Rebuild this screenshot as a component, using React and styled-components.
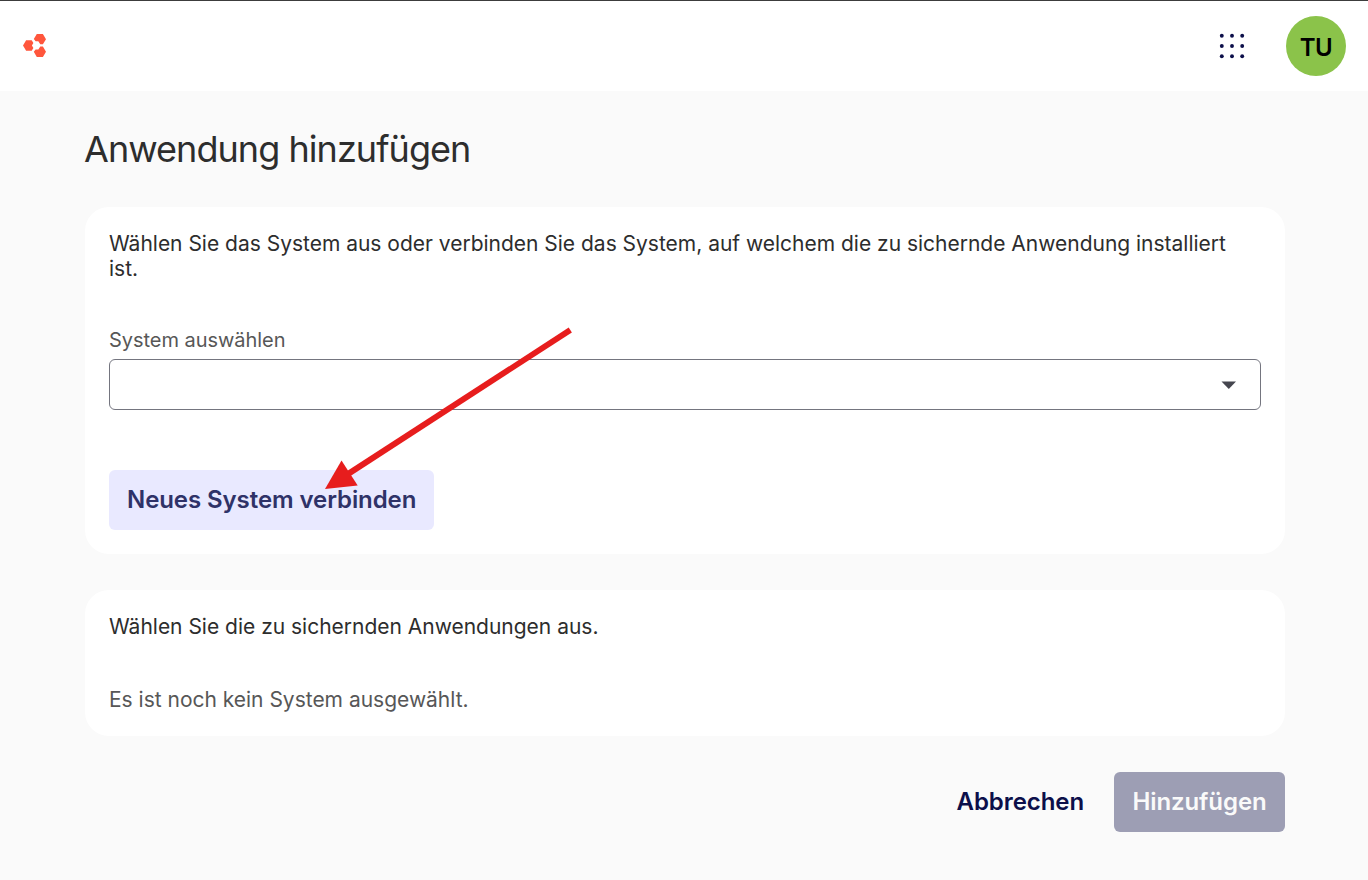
import React from "react"
import styled, { createGlobalStyle } from "styled-components"

const GlobalStyle = createGlobalStyle`
  * {
    box-sizing: border-box;
  }

  body {
    margin: 0;
    background: #fafafa;
    color: #2d2d2d;
    font-family: Inter, "Liberation Sans", sans-serif;
    font-size: 21px;
  }
`

const Page = styled.div`
  min-height: 880px;
  background: #fafafa;
`

const Header = styled.header`
  height: 91px;
  padding: 0 22px;
  display: flex;
  align-items: center;
  justify-content: space-between;
  background: #ffffff;
  border-top: 1px solid #3c3c3c;
`

const HeaderActions = styled.div`
  display: flex;
  align-items: center;
  gap: 41px;
`

const Avatar = styled.div`
  width: 60px;
  height: 60px;
  border-radius: 50%;
  display: flex;
  align-items: center;
  justify-content: center;
  padding-top: 2px;
  background: #8bc34a;
  color: #000000;
  font-size: 24px;
  font-weight: 600;
  letter-spacing: -0.6px;
`

const Main = styled.main`
  width: 1200px;
  margin-left: 85px;
  padding-top: 34px;
`

const Title = styled.h1`
  margin: 0 0 34px -1px;
  font-size: 36px;
  font-weight: 400;
  line-height: 48px;
  letter-spacing: -0.95px;
`

const Card = styled.section`
  position: relative;
  height: ${props => props.$height};
  margin-bottom: 36px;
  padding: 24px;
  border-radius: 24px;
  background: #ffffff;
`

const Text = styled.p`
  margin: 0;
  padding-right: 12px;
  line-height: 25px;
  letter-spacing: -0.01px;
`

const Hint = styled(Text)`
  margin-top: 48px;
  color: #575757;
`

const Label = styled.label`
  display: block;
  margin-top: 47px;
  color: #575757;
  font-size: 20px;
  line-height: 24px;
  letter-spacing: -0.04px;
`

const Select = styled.div`
  height: 51px;
  margin: 7px 0 60px;
  padding: 1px 24px 0 0;
  display: flex;
  align-items: center;
  justify-content: flex-end;
  border: 1px solid #74757f;
  border-radius: 6px;
`

const Button = styled.button`
  height: 60px;
  min-width: 171px;
  padding: 0 18px 2px;
  border: 0;
  border-radius: 6px;
  background: ${props => props.$background};
  color: ${props => props.$color};
  font-family: inherit;
  font-size: 24px;
  font-weight: 600;
  letter-spacing: -0.08px;
  white-space: nowrap;
`

const TextButton = styled(Button)`
  min-width: 0;
  background: transparent;
`

const Actions = styled.div`
  display: flex;
  justify-content: flex-end;
  gap: 12px;
`

const Pointer = styled.svg`
  position: absolute;
  left: 235px;
  top: 113px;
  pointer-events: none;
`

const Logo = () => (
  <svg width="26" height="26" viewBox="0 0 26 26" fill="#ff563c">
    <path d="M14.8 1h6.1L24 6.2l-3.1 5h-2.6l-2-3h-2.7L11.8 6z" />
    <path d="M4.1 7.2h5.6l1.7 2.8-1.5 2.5 1.5 2.6-1.7 2.7H4.1L1 12.5z" />
    <path d="M18.3 13.5h2.6l3.1 5.2-3.1 5.2h-6.1l-3-5.1 1.8-2.3h2.7z" />
  </svg>
)

const dots = [2.8, 13, 23.2]

const AppsIcon = () => (
  <svg width="26" height="26" viewBox="0 0 26 26" fill="#0c0f4a">
    {dots.map(y =>
      dots.map(x => <circle key={`${x}-${y}`} cx={x} cy={y} r="1.95" />)
    )}
  </svg>
)

export default function App() {
  return (
    <>
      <GlobalStyle />
      <Page>
        <Header>
          <Logo />
          <HeaderActions>
            <AppsIcon />
            <Avatar>TU</Avatar>
          </HeaderActions>
        </Header>
        <Main>
          <Title>Anwendung hinzufügen</Title>
          <Card $height="347px">
            <Text>
              Wählen Sie das System aus oder verbinden Sie das System, auf
              welchem die zu sichernde Anwendung installiert ist.
            </Text>
            <Label>System auswählen</Label>
            <Select>
              <svg width="15" height="8" viewBox="0 0 15 8" fill="#45464f">
                <path d="M.5.5H15L7.8 8z" />
              </svg>
            </Select>
            <Button $background="#e9e9ff" $color="#2f3268">
              Neues System verbinden
            </Button>
            <Pointer width="255" height="175" viewBox="320 320 255 175">
              <path d="M568.7 327.6l3.2 4.8L350.5 476l-3.4-5z" fill="#e71d1d" />
              <path d="M325 489l16.5-28.6 16.2 25z" fill="#e71d1d" />
            </Pointer>
          </Card>
          <Card $height="146px">
            <Text>Wählen Sie die zu sichernden Anwendungen aus.</Text>
            <Hint>Es ist noch kein System ausgewählt.</Hint>
          </Card>
          <Actions>
            <TextButton $color="#0c0f4a">Abbrechen</TextButton>
            <Button $background="#9d9eb4" $color="#fafafa" disabled>
              Hinzufügen
            </Button>
          </Actions>
        </Main>
      </Page>
    </>
  )
}
